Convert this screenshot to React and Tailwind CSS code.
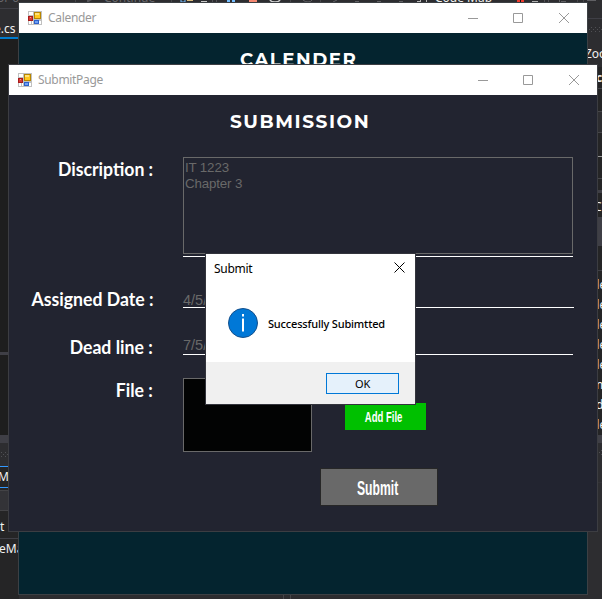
import React from "react";

const UI = "font-['Noto_Sans',sans-serif]";

function Band({ h, className = "", children }) {
  return (
    <div className={"shrink-0 overflow-hidden whitespace-nowrap flex items-center " + className} style={{ height: h }}>
      {children}
    </div>
  );
}

function Dots() {
  return (
    <svg width="18" height="6" className="shrink-0" fill="#505054">
      {[0, 4, 8, 12, 16].map((x) => (
        <g key={x}>
          <rect x={x + 1} y="0" width="1" height="1" />
          <rect x={x - 1} y="2" width="1" height="1" />
          <rect x={x + 1} y="4" width="1" height="1" />
        </g>
      ))}
    </svg>
  );
}

function Toolbar() {
  return (
    <svg width="602" height="8" className="block shrink-0">
      <g fill="#68686c" fontFamily="Noto Sans, sans-serif" fontSize="12">
        <text x="-3" y="2">or 0</text>
        <text x="104" y="2">Continue</text>
      </g>
      <path d="M87 0h5l-5 3z" fill="#55555a" />
      <path d="M75.500 0v3M171.500 0v3M320.500 0v3M290.500 0v3M577.500 0v3M583.500 0v3" stroke="#46464a" />
      <path d="M181 0v2h4V0" stroke="#75beff" fill="none" />
      <path d="M187 .5h6" stroke="#d7ba7d" />
      <path d="M201 1.500h6" stroke="#c8c8c8" />
      <path d="M212 1h1M216 1h1M544 1h1M548 1h1" stroke="#77777b" />
      <path d="M227 0h3v2h-3zM232 0h3v2h-3z" fill="#75beff" />
      <path d="M249 0h8v2h-8z" fill="#f48771" />
      <path d="M270 0q1 2 5 2t5-2" stroke="#d0d0d0" strokeWidth="1.500" fill="none" />
      <path d="M303 0q2 2 5 2t4-2M333 2l4-2M355 1.500h4M377 1.500h4M399 1.500h4M559.500 0v3M561 1.500h5M587 .5h9" stroke="#606064" fill="none" />
      <path d="M417 1.500h4M420.500 0v3M426.500 0v3" stroke="#b8b8b8" />
      <text x="435" y="2" fill="#f1f1f1" fontFamily="Noto Sans, sans-serif" fontSize="12">Code Map</text>
      <path d="M517 0h3v2h-3zM521 0h3v2h-3z" fill="#f03a2e" />
      <path d="M520 0h1v2h-1z" fill="#111" />
      <path d="M532 1.500h6" stroke="#b0b0b0" />
    </svg>
  );
}

function Backdrop() {
  return (
    <div className={"w-full h-full flex flex-col bg-[#2d2d30] text-[12px] leading-none text-[#f1f1f1] " + UI}>
      <Toolbar />
      <div className="flex-1 flex justify-between min-h-0">
        <div className="w-[19px] flex flex-col">
          <Band h={1} className="bg-[#3f3f46]" />
          <Band h={28} className="pt-[12px] -ml-[6px]">e.cs</Band>
          <Band h={2} className="bg-[#007acc]" />
          <Band h={313} className="bg-[#1e1e1e]" />
          <Band h={3} className="bg-[#3f3f46]" />
          <Band h={80} className="bg-[#1e1e1e]" />
          <Band h={8} className="bg-[#3f3f46]" />
          <Band h={23} className=""><Dots /></Band>
          <Band h={1} className="bg-[#3399ff]" />
          <Band h={20} className="bg-[#252526]"><span className="-ml-[2px]">M</span></Band>
          <Band h={1} className="bg-[#3399ff]" />
          <Band h={2} className="bg-[#252526]" />
          <Band h={21} className="bg-[#333337] border-y border-[#434346]" />
          <Band h={27} className="bg-[#252526] pt-[5px]">t</Band>
          <Band h={1} className="bg-[#3f3f46]" />
          <Band h={60} className="bg-[#252526] items-start pt-[4px]"><span className="-ml-[1px]">eMa</span></Band>
        </div>
        <div className="w-[16px] flex flex-col">
          <Band h={10} />
          <Band h={1} className="bg-[#3f3f46]" />
          <Band h={18} className="pt-[4px]"><Dots /></Band>
          <Band h={30} className="pt-[4px]"><span className="-ml-px">Zoo</span></Band>
          <Band h={21} className="bg-[#252526] font-bold pl-[10px]">co</Band>
          <Band h={1} className="bg-[#46464a]" />
          <Band h={22} className="bg-[#252526]" />
          <Band h={1} className="bg-[#46464a]" />
          <Band h={20} className="bg-[#2d2d30]" />
          <Band h={1} className="bg-[#46464a]" />
          <Band h={23} className="bg-[#252526]" />
          <Band h={1} className="bg-[#999999]" />
          <Band h={21} className="bg-[#252526]" />
          <Band h={1} className="bg-[#46464a]" />
          <Band h={11} className="bg-[#252526]" />
          <Band h={3} className="bg-[#3f3f46]" />
          <Band h={24} className="bg-[#252526] pl-[8px] pt-[3px]">Cl</Band>
          <Band h={29} className="bg-[#3f3f46]" />
          <Band h={24} className="bg-[#252526]" />
          <Band h={1} className="bg-[#3f3f46]" />
          <Band h={4} className="bg-[#252526]" />
          {["de", "de", "de", "de", "de", "m", "d", "de"].map((t, i) => (
            <Band key={i} h={20} className={t === "d" ? "bg-[#252526] pl-[10px]" : "bg-[#252526] pl-[6px]"}>{t}</Band>
          ))}
          <Band h={8} className="bg-[#3f3f46]" />
          <Band h={20} className="pl-[10px]"><Dots /></Band>
          <Band h={20} className="border-b border-[#333337]" />
        </div>
      </div>
    </div>
  );
}

function FormIcon() {
  return (
    <svg width="14" height="14" className="shrink-0" shapeRendering="crispEdges">
      <path d="M0 0h14v14H0z" fill="#c0c0c0" />
      <path d="M1 1h4v3H1zM1 10h2v3H1zM4 10h1v3H4zM11 10h2v3h-2z" fill="#fff" />
      <path d="M0 5h5v5H0z" fill="#a81c1c" />
      <path d="M1 6h3v3H1z" fill="#d83a34" />
      <path d="M2 6h1v1H2z" fill="#f79a8c" />
      <path d="M6 1h7v7H6z" fill="#b88600" />
      <path d="M7 2h5v5H7z" fill="#ffc81e" />
      <path d="M7 2h4v2H7z" fill="#ffe27a" />
      <path d="M6 9h5v4H6z" fill="#2e62cc" />
      <path d="M7 10h3v2H7z" fill="#6fa0f4" />
    </svg>
  );
}

function TitleBar({ title }) {
  return (
    <div className={"h-[30px] shrink-0 bg-white flex items-center pl-[9px] pr-[17px] text-[#999999] " + UI}>
      <FormIcon />
      <span className="ml-[6px] text-[12px] leading-none tracking-[-0.32px] flex-1">{title}</span>
      <svg width="102" height="12" fill="none" stroke="#999999">
        <path d="M0 6.500h10" />
        <path d="M45.500 1.500h9v9h-9z" />
        <path d="M91 1l10 10M101 1L91 11" />
      </svg>
    </div>
  );
}

function Heading({ children, className }) {
  return (
    <div className={"text-white font-bold font-['Montserrat','Lato',sans-serif] text-[18px] leading-[21px] whitespace-nowrap " + className}>
      {children}
    </div>
  );
}

function Label({ children }) {
  return (
    <div className="w-[144px] shrink-0 flex justify-end whitespace-nowrap text-white font-bold font-['Lato',sans-serif] text-[18px] leading-[24px]">
      <span className="inline-block origin-right scale-x-[0.98]">{children}</span>
    </div>
  );
}

function SubmitForm() {
  return (
    <div className="flex-1 bg-[#222430] flex flex-col font-['Liberation_Sans',sans-serif] text-[#696969]">
      <div className="h-[62px] pt-[17px] pl-[221px]">
        <Heading className="origin-left tracking-[1.5px] scale-x-[1.03]">SUBMISSION</Heading>
      </div>
      <div className="flex h-[130px]">
        <Label>Discription :</Label>
        <div className="ml-[30px] w-[390px] h-[100px] border-b border-white">
          <div className="h-[97px] border border-[#696969] pl-px pt-[2px] text-[13.330px] tracking-[-0.15px] leading-[16px]">
            IT 1223<br />Chapter 3
          </div>
        </div>
      </div>
      <div className="flex h-[48px]">
        <Label>Assigned Date :</Label>
        <div className="ml-[30px] w-[391px] h-[21px] border-b border-white text-[14.500px] leading-[26px]">4/5/2022</div>
      </div>
      <div className="flex h-[43px]">
        <Label>Dead line :</Label>
        <div className="ml-[30px] w-[390px] h-[20px] border-b border-white text-[14.500px] leading-[20px]">7/5/2022</div>
      </div>
      <div className="flex h-[91px]">
        <Label>File :</Label>
        <div className="ml-[30px] w-[129px] h-[74px] border border-[#696969] bg-[#020303]" />
        <button className="ml-[33px] mt-[25px] w-[81px] h-[27px] bg-[#00c000] text-white font-bold text-[14px] leading-none flex items-center justify-center">
          <span className="scale-x-[0.68] whitespace-nowrap -ml-[4px] pt-px">Add File</span>
        </button>
      </div>
      <button className="ml-[312px] w-[116px] h-[36px] bg-[#696969] outline outline-[#272727] text-white font-bold text-[21px] leading-none flex items-center justify-center">
        <span className="scale-x-[0.58] whitespace-nowrap -ml-[2px]">Submit</span>
      </button>
    </div>
  );
}

function MessageBox() {
  return (
    <div className={"w-full h-full flex flex-col bg-white text-black text-[12px] leading-none " + UI}>
      <div className="h-[30px] flex items-center justify-between pl-[8px] pr-[10px]">
        <span className="tracking-[-0.3px]">Submit</span>
        <svg width="11" height="11" stroke="#000" strokeWidth="1" className="-mt-[3px]">
          <path d="M.5.5l10 10M10.500.5L.5 10.500" />
        </svg>
      </div>
      <div className="h-[78px] flex items-center pl-[22px]">
        <svg width="30" height="30" className="shrink-0">
          <circle cx="15" cy="15" r="14.500" fill="#0078d7" stroke="#14508c" />
          <path d="M14 6h2v2.500h-2zM14 10.500h2v13h-2z" fill="#fff" />
        </svg>
        <span className="ml-[10px] text-[11px] font-medium whitespace-nowrap tracking-[-0.18px]">Successfully Subimtted</span>
      </div>
      <div className="flex-1 bg-[#f0f0f0] pt-[11px] pl-[120px]">
        <button className="w-[73px] h-[21px] border border-[#0078d7] bg-[#e5f1fb] text-[11px] font-normal tracking-[-0.1px] flex items-center justify-center">OK</button>
      </div>
    </div>
  );
}

export default function App() {
  return (
    <div className="relative w-[602px] h-[599px] overflow-hidden">
      <Backdrop />
      <div className="absolute left-[283px] top-[594px] w-[8px] h-[5px] border-x border-[#46464a]" />
      <div className="absolute left-[18px] top-[2px] w-[570px] h-[593px] border border-[#3c4044] flex flex-col">
        <TitleBar title="Calender" />
        <div className="flex-1 bg-[#04242f] pt-[17px] pl-[221px]">
          <Heading className="origin-left tracking-[1.500px] scale-x-[1.01]">CALENDER</Heading>
        </div>
      </div>
      <div className="absolute left-[8px] top-[64px] w-[590px] h-[468px] border border-[#3c3d42] flex flex-col">
        <TitleBar title="SubmitPage" />
        <SubmitForm />
      </div>
      <div className="absolute left-[206px] top-[254px] w-[209px] h-[150px] shadow-[0_0_0_1px_#33343c]">
        <MessageBox />
      </div>
    </div>
  );
}
